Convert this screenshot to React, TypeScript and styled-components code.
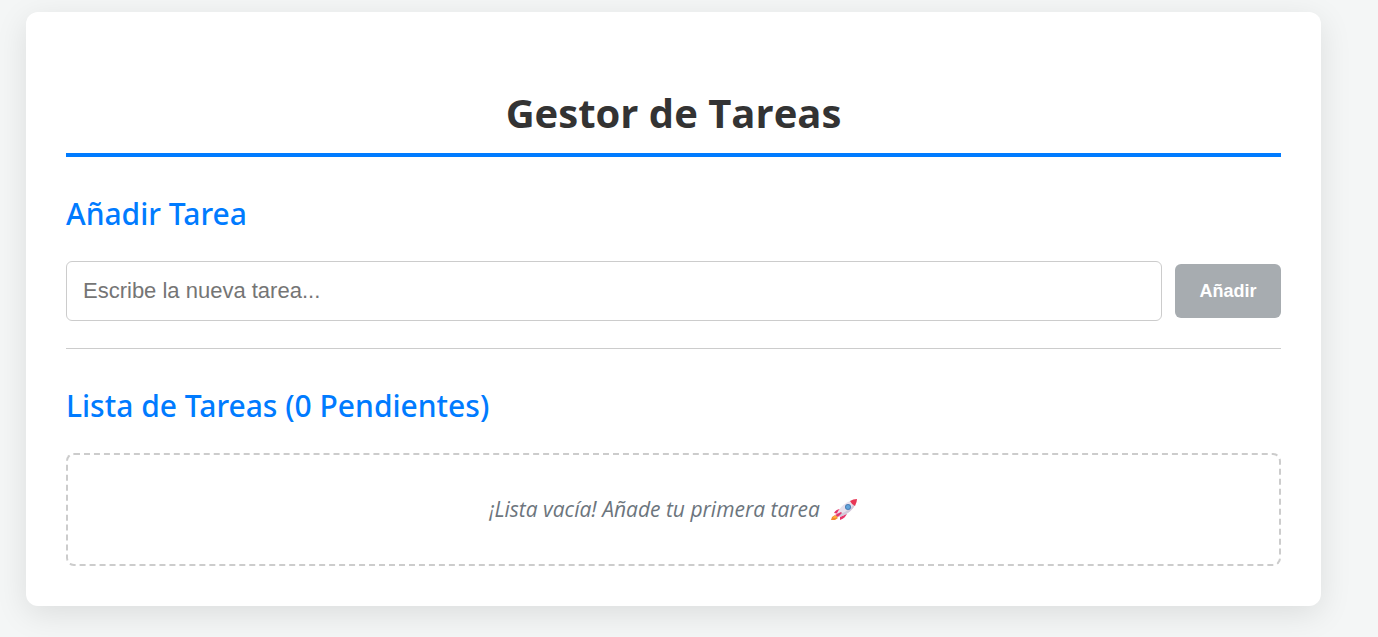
import React, { useState } from "react";
import styled, { createGlobalStyle } from "styled-components";

const GlobalStyle = createGlobalStyle`
  *, *::before, *::after { box-sizing: border-box; }
  body {
    margin: 0;
    background: #f4f6f6;
    color: #333;
    font-family: "Open Sans", "Noto Sans", sans-serif;
  }
`;

const Page = styled.div`
  padding: 12px 57px 31px 26px;
`;

const Card = styled.main`
  padding: 72px 40px 40px;
  background: #fff;
  border-radius: 12px;
  box-shadow: 0 8px 32px rgba(0, 0, 0, 0.1);
`;

const Title = styled.h1`
  margin: 0;
  padding-bottom: 12px;
  border-bottom: 4px solid #007bff;
  font-size: 40px;
  font-weight: 700;
  line-height: 57px;
  text-align: center;
`;

const SectionTitle = styled.h2`
  margin: 36px 0 26px;
  color: #007bff;
  font-family: "Noto Sans", sans-serif;
  font-size: 30px;
  font-weight: 500;
  line-height: 42px;
`;

const TaskForm = styled.form`
  display: flex;
  align-items: center;
  gap: 13px;
  padding-bottom: 27px;
  border-bottom: 1px solid #ccc;
`;

const TaskInput = styled.input`
  flex: 1;
  min-width: 0;
  height: 60px;
  padding: 0 16px;
  border: 1px solid #ccc;
  border-radius: 6px;
  background: #fff;
  color: #333;
  font-family: "Liberation Sans", Arial, sans-serif;
  font-size: 22px;

  &::placeholder { color: #757575; opacity: 1; }
`;

const AddButton = styled.button`
  min-width: 106px;
  height: 54px;
  padding: 0 24px;
  border: 0;
  border-radius: 6px;
  background: #28a745;
  color: #fff;
  font-family: "Liberation Sans", Arial, sans-serif;
  font-size: 18px;
  font-weight: 700;
  cursor: pointer;

  &:disabled { background: #a7acb0; cursor: not-allowed; }
`;

const EmptyList = styled.p`
  display: flex;
  align-items: center;
  justify-content: center;
  gap: 10px;
  margin: 0;
  padding: 38px;
  border: 2px dashed #ccc;
  border-radius: 8px;
  color: #6c757d;
  font-size: 21px;
  font-style: italic;
  line-height: 33px;
`;

const RocketIcon = styled.svg`
  width: 28px;
  height: 24px;
`;

function Rocket() {
  return (
    <RocketIcon viewBox="0 0 28 24" aria-label="cohete" role="img">
      <path d="M5 17 L2 19 L1 22 L5 22 L8 20Z" fill="#f28a2e" />
      <path d="M4 18 L3 20 L6 20 L8 18Z" fill="#fbb03b" />
      <path d="M11 11 Q6 11 4 15 L9 16Z M17 15 Q16 20 10 22 L10 17Z" fill="#e8346b" />
      <path d="M7 15 Q11 7 20 3 L25 2 L25 7 Q21 15 10 19Z" fill="#e8e1ec" />
      <path d="M8 17 L10 19 Q21 15 25 7 L24 6 Q18 14 8 17Z" fill="#d2c8da" />
      <path d="M20 3 Q23 1 27 1 Q27 4 25 8 Q22 7 20 3Z" fill="#e83756" />
      <path d="M5 17 L11 14 L12 15 L8 19Z" fill="#e03a72" />
      <circle cx="18" cy="9" r="3" fill="#487db5" />
      <circle cx="18" cy="9" r="2" fill="#62a4db" />
    </RocketIcon>
  );
}

export default function App() {
  const [task, setTask] = useState("");

  return (
    <>
      <GlobalStyle />
      <Page>
        <Card>
          <Title>Gestor de Tareas</Title>
          <section>
            <SectionTitle>Añadir Tarea</SectionTitle>
            <TaskForm onSubmit={(event) => event.preventDefault()}>
              <TaskInput
                type="text"
                aria-label="Nueva tarea"
                placeholder="Escribe la nueva tarea..."
                value={task}
                onChange={(event) => setTask(event.target.value)}
              />
              <AddButton type="submit" disabled={!task.trim()}>Añadir</AddButton>
            </TaskForm>
          </section>
          <section>
            <SectionTitle>Lista de Tareas (0 Pendientes)</SectionTitle>
            <EmptyList>
              <span>¡Lista vacía! Añade tu primera tarea</span>
              <Rocket />
            </EmptyList>
          </section>
        </Card>
      </Page>
    </>
  );
}
